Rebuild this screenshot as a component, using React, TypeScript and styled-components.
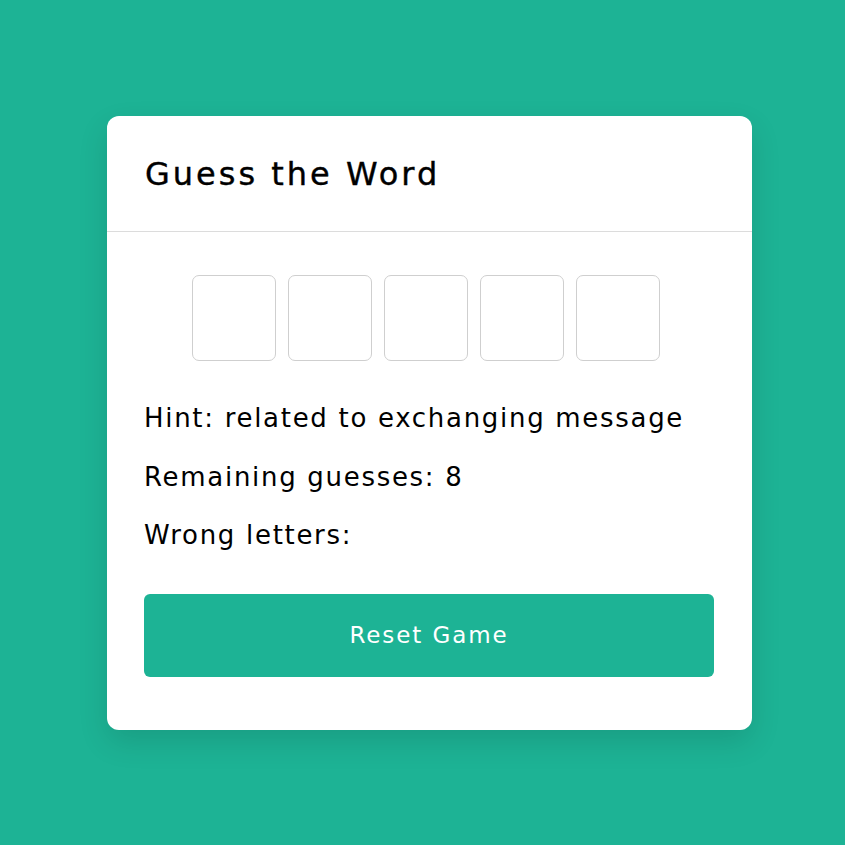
import React from "react";
import styled, { createGlobalStyle } from "styled-components";

const Global = createGlobalStyle`
  html, body { margin: 0; padding: 0; background: #1db395; }
  body { font-family: "DejaVu Sans", Inter, sans-serif; }
`;

const Page = styled.div`
  min-height: 845px;
  box-sizing: border-box;
  padding: 116px 93px 0 107px;
  display: flex;
  align-items: flex-start;
`;

const Card = styled.div`
  width: 645px;
  background: #ffffff;
  border-radius: 12px;
  box-shadow: 0 12px 30px rgba(0, 0, 0, 0.12);
  overflow: hidden;
`;

const Header = styled.div`
  height: 115px;
  display: flex;
  align-items: center;
  padding: 0 38px;
  border-bottom: 1px solid #dcdcdc;
`;

const Title = styled.h1`
  margin: 0;
  font-size: 32px;
  font-weight: 400;
  color: #000;
  letter-spacing: 3px;
  -webkit-text-stroke: 0.4px #000;
`;

const Body = styled.div`
  padding: 43px 38px 53px 37px;
  display: flex;
  flex-direction: column;
`;

const Slots = styled.div`
  display: flex;
  justify-content: center;
  gap: 12px;
  padding-right: 7px;
`;

const Slot = styled.div`
  width: 82px;
  height: 84px;
  border: 1px solid #cfcfcf;
  border-radius: 7px;
`;

const Info = styled.div`
  margin-top: 28px;
  display: flex;
  flex-direction: column;
`;

const Line = styled.p`
  margin: 0;
  font-size: 26px;
  line-height: 58.5px;
  color: #000;
  letter-spacing: 1.7px;
`;

const Button = styled.button`
  margin-top: 29px;
  height: 83px;
  border: none;
  border-radius: 6px;
  background: #1db395;
  color: #fff;
  font-family: inherit;
  font-size: 23px;
  letter-spacing: 1.9px;
  cursor: pointer;
`;

export default function App() {
  return (
    <>
      <Global />
      <Page>
        <Card>
          <Header>
            <Title>Guess the Word</Title>
          </Header>
          <Body>
            <Slots>
              {[0, 1, 2, 3, 4].map((i) => (
                <Slot key={i} />
              ))}
            </Slots>
            <Info>
              <Line>Hint: related to exchanging message</Line>
              <Line>Remaining guesses: 8</Line>
              <Line>Wrong letters:</Line>
            </Info>
            <Button>Reset Game</Button>
          </Body>
        </Card>
      </Page>
    </>
  );
}
